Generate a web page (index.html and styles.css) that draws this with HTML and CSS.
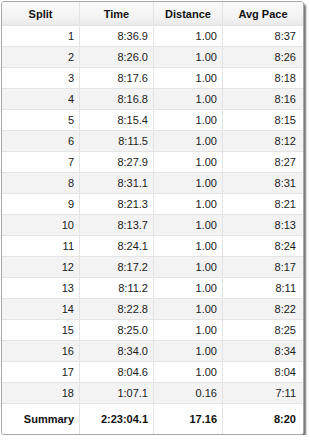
FILE: index.html
```html
<!DOCTYPE html>
<html>
<head>
<meta charset="utf-8">
<link rel="stylesheet" href="styles.css">
</head>
<body>
<div class="frame">
  <div class="grid">
    <div class="cell head">Split</div><div class="cell head">Time</div><div class="cell head">Distance</div><div class="cell head">Avg Pace</div>
    <div class="cell">1</div><div class="cell">8:36.9</div><div class="cell">1.00</div><div class="cell last">8:37</div>
    <div class="cell alt">2</div><div class="cell alt">8:26.0</div><div class="cell alt">1.00</div><div class="cell alt last">8:26</div>
    <div class="cell">3</div><div class="cell">8:17.6</div><div class="cell">1.00</div><div class="cell last">8:18</div>
    <div class="cell alt">4</div><div class="cell alt">8:16.8</div><div class="cell alt">1.00</div><div class="cell alt last">8:16</div>
    <div class="cell">5</div><div class="cell">8:15.4</div><div class="cell">1.00</div><div class="cell last">8:15</div>
    <div class="cell alt">6</div><div class="cell alt">8:11.5</div><div class="cell alt">1.00</div><div class="cell alt last">8:12</div>
    <div class="cell">7</div><div class="cell">8:27.9</div><div class="cell">1.00</div><div class="cell last">8:27</div>
    <div class="cell alt">8</div><div class="cell alt">8:31.1</div><div class="cell alt">1.00</div><div class="cell alt last">8:31</div>
    <div class="cell">9</div><div class="cell">8:21.3</div><div class="cell">1.00</div><div class="cell last">8:21</div>
    <div class="cell alt">10</div><div class="cell alt">8:13.7</div><div class="cell alt">1.00</div><div class="cell alt last">8:13</div>
    <div class="cell">11</div><div class="cell">8:24.1</div><div class="cell">1.00</div><div class="cell last">8:24</div>
    <div class="cell alt">12</div><div class="cell alt">8:17.2</div><div class="cell alt">1.00</div><div class="cell alt last">8:17</div>
    <div class="cell">13</div><div class="cell">8:11.2</div><div class="cell">1.00</div><div class="cell last">8:11</div>
    <div class="cell alt">14</div><div class="cell alt">8:22.8</div><div class="cell alt">1.00</div><div class="cell alt last">8:22</div>
    <div class="cell">15</div><div class="cell">8:25.0</div><div class="cell">1.00</div><div class="cell last">8:25</div>
    <div class="cell alt">16</div><div class="cell alt">8:34.0</div><div class="cell alt">1.00</div><div class="cell alt last">8:34</div>
    <div class="cell">17</div><div class="cell">8:04.6</div><div class="cell">1.00</div><div class="cell last">8:04</div>
    <div class="cell alt">18</div><div class="cell alt">1:07.1</div><div class="cell alt">0.16</div><div class="cell alt last">7:11</div>
    <div class="cell sum">Summary</div><div class="cell sum">2:23:04.1</div><div class="cell sum">17.16</div><div class="cell sum last">8:20</div>
  </div>
</div>
</body>
</html>
```
FILE: styles.css
```css
html, body {
  margin: 0;
  padding: 0;
  background: #ffffff;
}
body {
  padding: 1px 0 0 1px;
  font-family: "Liberation Sans", Arial, sans-serif;
  font-size: 11px;
  color: #1a1a1a;
}
.frame {
  width: 301px;
  border: 1px solid #a8a8a8;
  border-radius: 3px;
  box-shadow: 2px 3px 2px rgba(0, 0, 0, 0.55);
  overflow: hidden;
  background: #ffffff;
}
.grid {
  display: grid;
  grid-template-columns: 77px 73px 68px 80px;
  grid-template-rows: 23px repeat(18, 20px) 30px;
  column-gap: 1px;
  row-gap: 1px;
  background: #e4e4e4;
}
.cell {
  background: #ffffff;
  text-align: right;
  padding-right: 5px;
  display: flex;
  align-items: center;
  justify-content: flex-end;
  white-space: nowrap;
}
.cell.last {
  padding-right: 7px;
}
.cell.alt {
  background: #f3f3f3;
}
.cell.head {
  background: linear-gradient(#f9f9f9 0%, #f4f4f4 65%, #e9e9e9 100%);
  font-weight: bold;
  justify-content: center;
  padding-right: 0;
  color: #111;
}
.cell.sum {
  font-weight: bold;
  color: #111;
}
```
